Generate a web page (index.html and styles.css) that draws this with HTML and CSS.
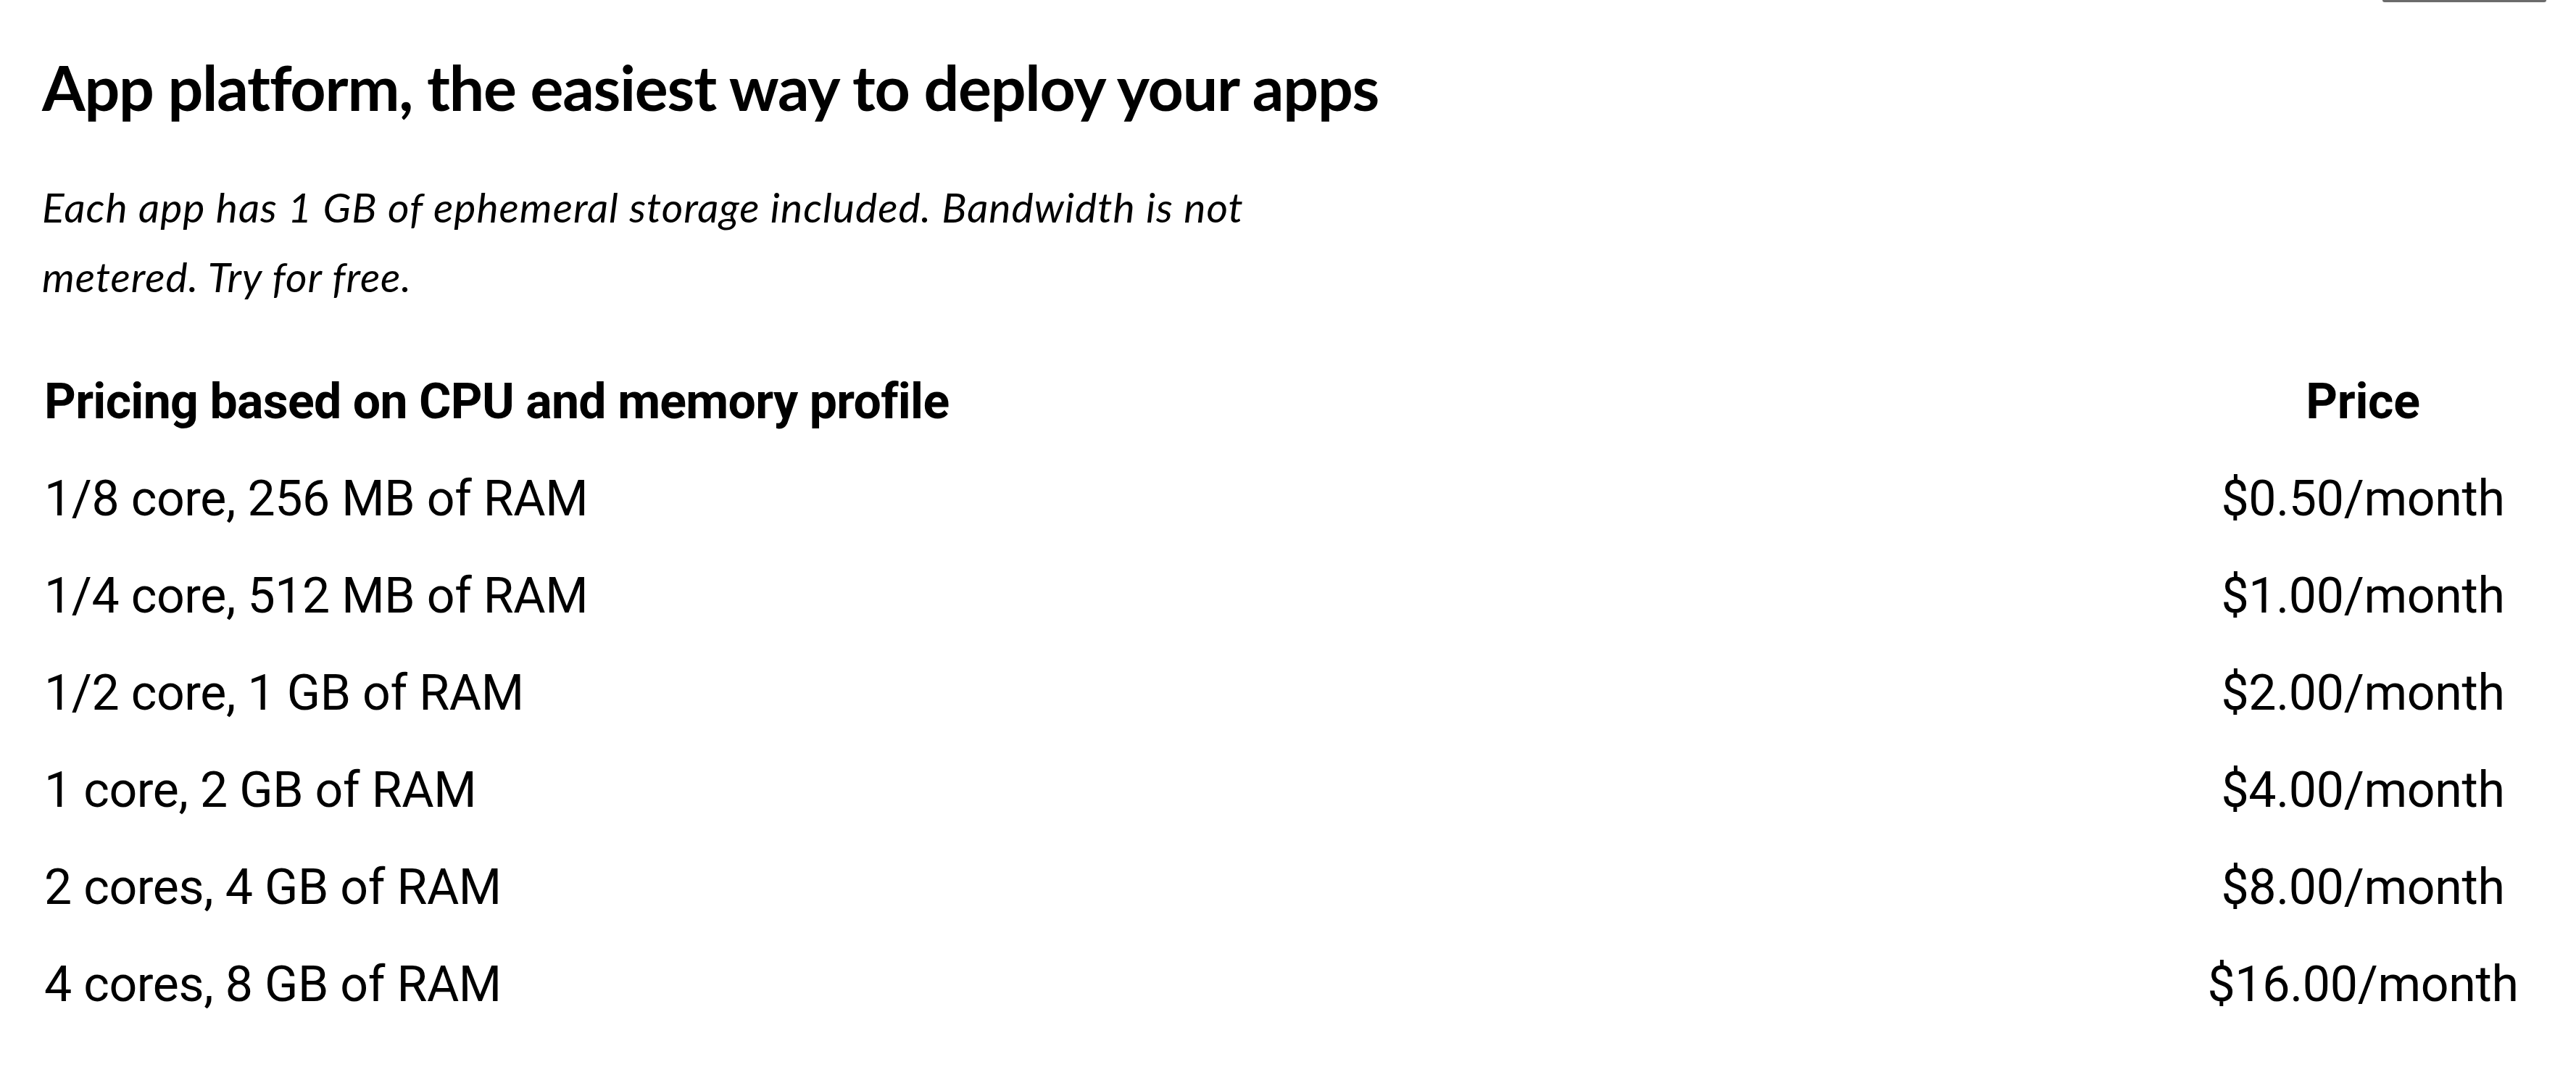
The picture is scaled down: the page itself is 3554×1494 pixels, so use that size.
FILE: index.html
```html
<!DOCTYPE html>
<html lang="en">
<head>
<meta charset="utf-8">
<title>App platform pricing</title>
<link rel="stylesheet" href="styles.css">
</head>
<body>
<div class="topbar"><span class="topbar-edge"></span></div>
<main class="page">
  <h1 class="title">App platform, the easiest way to deploy your apps</h1>
  <p class="lead">Each app has 1 GB of ephemeral storage included. Bandwidth is not metered. Try for free.</p>
  <div class="pricing">
    <div class="cell head">Pricing based on CPU and memory profile</div>
    <div class="cell head price">Price</div>
    <div class="cell">1/8 core, 256 MB of RAM</div>
    <div class="cell price">$0.50/month</div>
    <div class="cell">1/4 core, 512 MB of RAM</div>
    <div class="cell price">$1.00/month</div>
    <div class="cell">1/2 core, 1 GB of RAM</div>
    <div class="cell price">$2.00/month</div>
    <div class="cell">1 core, 2 GB of RAM</div>
    <div class="cell price">$4.00/month</div>
    <div class="cell">2 cores, 4 GB of RAM</div>
    <div class="cell price">$8.00/month</div>
    <div class="cell">4 cores, 8 GB of RAM</div>
    <div class="cell price">$16.00/month</div>
  </div>
</main>
</body>
</html>
```
FILE: styles.css
```css
* { box-sizing: border-box; }
html, body { margin: 0; padding: 0; background: #fff; color: #000; }

.topbar {
  display: flex;
  justify-content: flex-end;
  padding-right: 41px;
  height: 0;
}
.topbar-edge {
  display: block;
  width: 226px;
  height: 3px;
  background: #6b6b6b;
  border-radius: 0 0 3px 3px;
  box-shadow: 0 0 2px rgba(0,0,0,0.15);
}

.page {
  padding: 68px 61px 40px 58px;
}

.title {
  margin: 0;
  font-family: Lato, "Noto Sans", sans-serif;
  font-weight: 700;
  font-size: 86px;
  line-height: 103px;
  letter-spacing: -1.2px;
}

.lead {
  margin: 66px 0 0 0;
  max-width: 1720px;
  font-family: Lato, "Noto Sans", sans-serif;
  font-style: italic;
  font-size: 57px;
  line-height: 96px;
  letter-spacing: 1px;
}

.pricing {
  margin-top: 58px;
  display: grid;
  grid-template-columns: 1fr 466px;
}

.cell {
  font-family: Roboto, "Noto Sans", sans-serif;
  font-size: 68px;
  line-height: 134px;
  padding-left: 3px;
  white-space: nowrap;
  letter-spacing: -0.4px;
}
.cell.head { font-weight: 700; letter-spacing: -0.7px; }
.cell.price { text-align: center; padding-left: 0; letter-spacing: -0.3px; }
```
